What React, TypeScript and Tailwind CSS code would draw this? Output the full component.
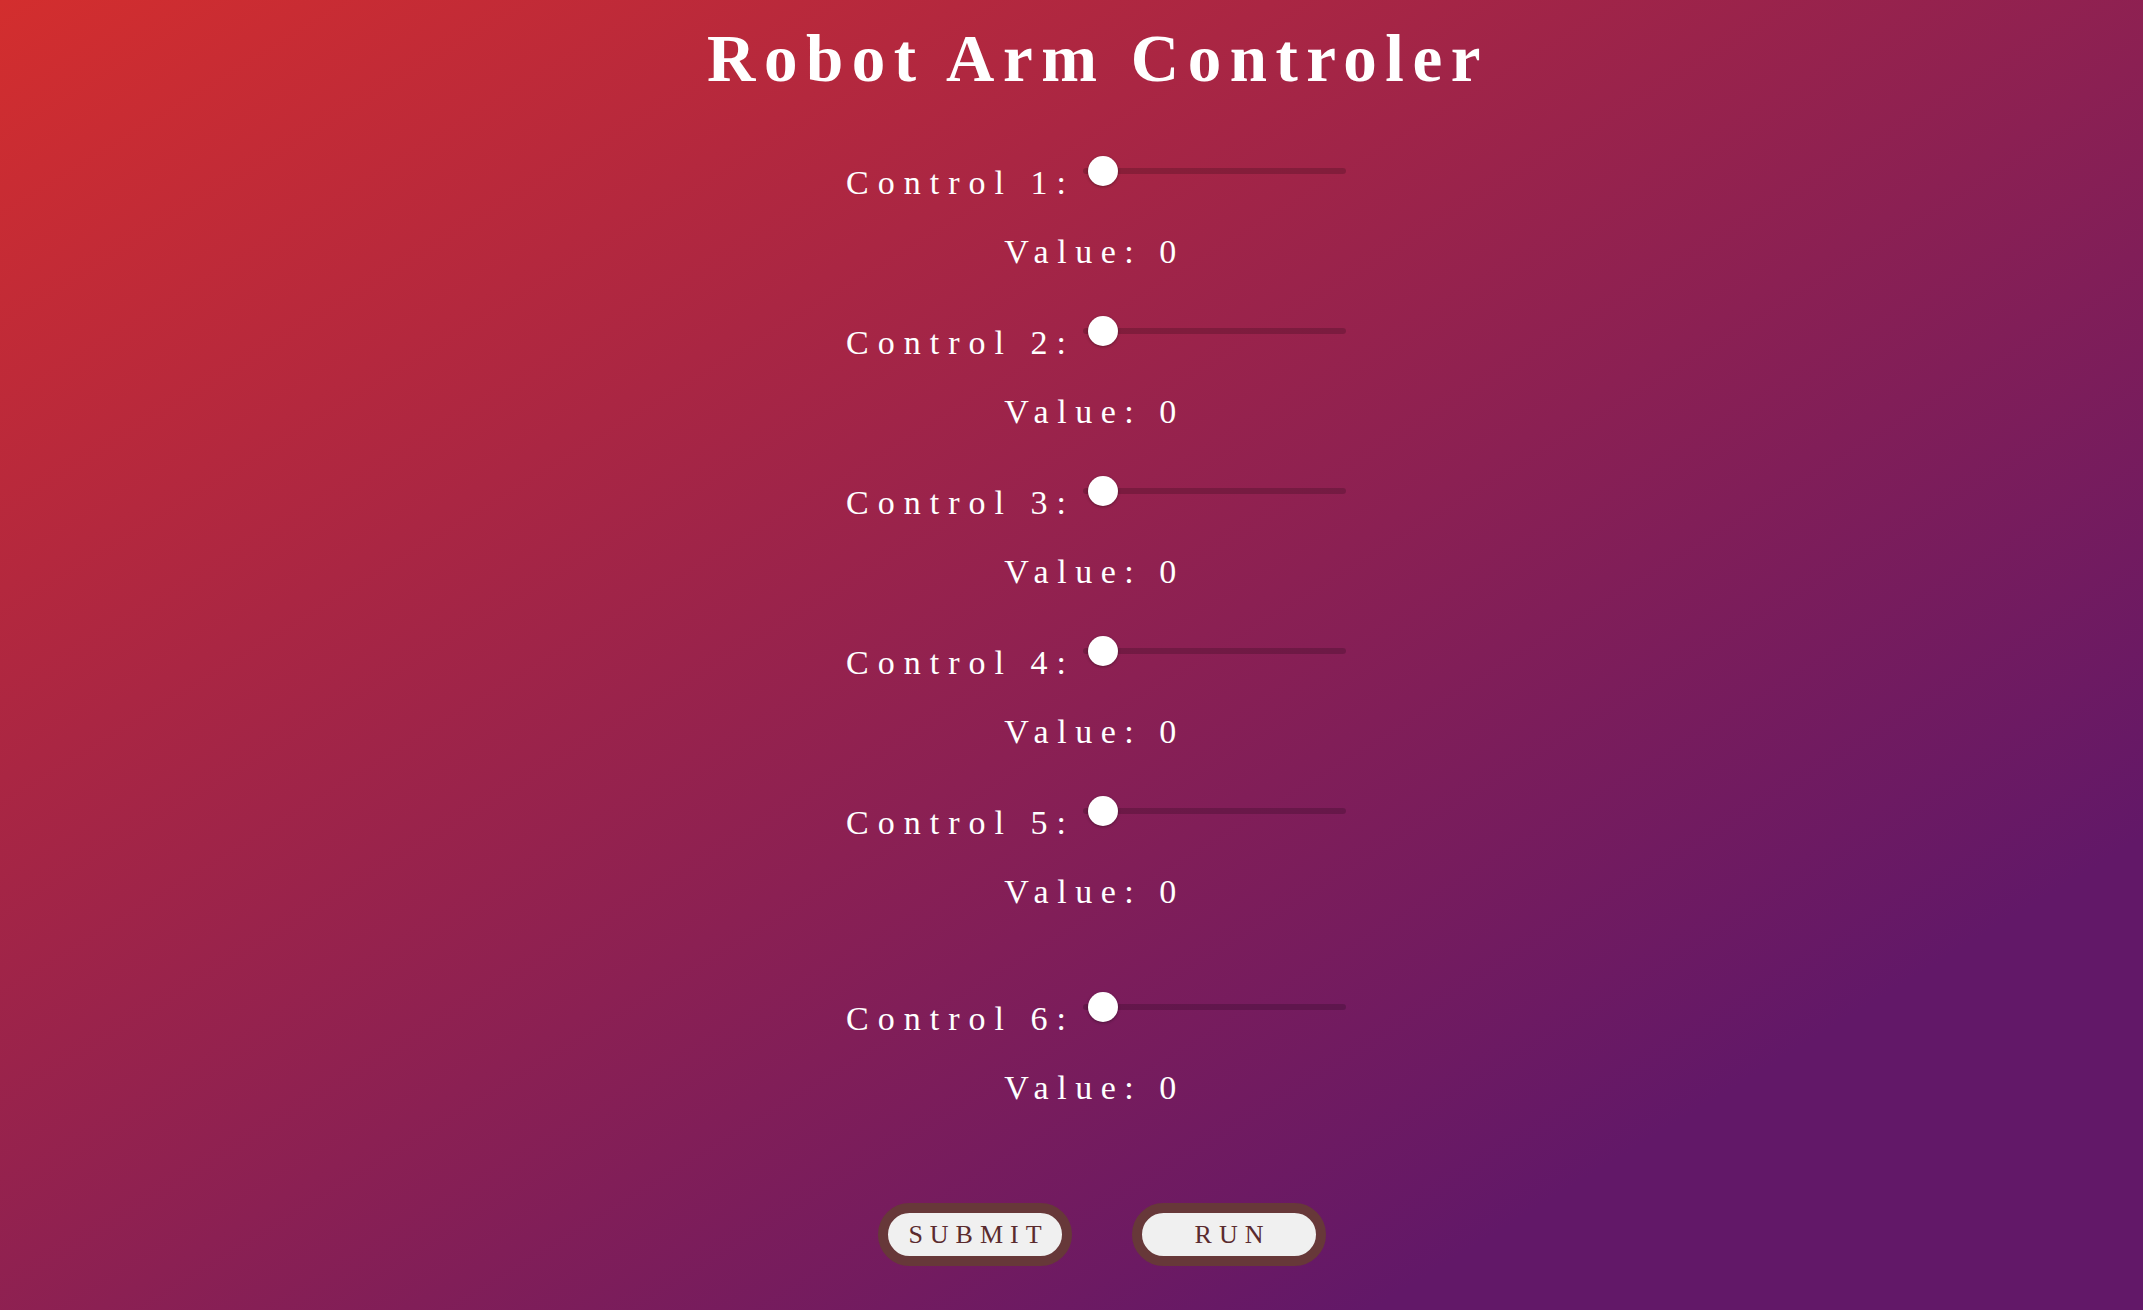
import { useState } from "react";

const serif = "font-['Liberation_Serif','Times_New_Roman',serif]";

function Control({ index, last }: { index: number; last?: boolean }) {
  const [value, setValue] = useState(0);
  return (
    <div className={last ? "mt-[87px] flex flex-col items-center" : "mt-[51px] first:mt-0 flex flex-col items-center"}>
      <div className="flex items-start justify-center pl-[49px]">
        <label className="text-[34px] leading-[40px] tracking-[9px] text-white">Control {index}:</label>
        <input
          type="range"
          min={0}
          max={180}
          value={value}
          onChange={(e) => setValue(Number(e.target.value))}
          className="ml-[8px] mt-[5px] h-[6px] w-[263px] cursor-pointer appearance-none rounded-full bg-[rgba(0,0,0,0.18)] pl-[5px] outline-none [&::-webkit-slider-thumb]:h-[30px] [&::-webkit-slider-thumb]:w-[30px] [&::-webkit-slider-thumb]:appearance-none [&::-webkit-slider-thumb]:rounded-full [&::-webkit-slider-thumb]:bg-white [&::-webkit-slider-thumb]:shadow-[0_1px_3px_rgba(0,0,0,0.35)]"
        />
      </div>
      <p className="mt-[29px] pl-[46px] text-[34px] leading-[40px] tracking-[8.5px] text-white">Value: {value}</p>
    </div>
  );
}

export default function App() {
  return (
    <div
      className={`min-h-screen w-full bg-[linear-gradient(to_bottom_right,#d32e2e,#621868_82%)] ${serif}`}
    >
      <h1 className="pl-[53px] pt-[25px] text-center text-[67px] font-bold leading-none tracking-[8.5px] text-white">
        Robot Arm Controler
      </h1>

      <div className="mt-[71px] flex flex-col">
        {[1, 2, 3, 4, 5].map((i) => (
          <Control key={i} index={i} />
        ))}
        <Control index={6} last />
      </div>

      <div className="mt-[95px] flex items-center justify-center gap-[60px] pl-[61px]">
        <button className="flex h-[63px] w-[194px] items-center justify-center rounded-full border-[10px] border-[#673839] bg-[#f0f0f0] pl-[7px] text-[26px] tracking-[7px] text-[#5a2b2e]">
          SUBMIT
        </button>
        <button className="flex h-[63px] w-[194px] items-center justify-center rounded-full border-[10px] border-[#673839] bg-[#f0f0f0] pl-[7px] text-[26px] tracking-[7px] text-[#5a2b2e]">
          RUN
        </button>
      </div>
    </div>
  );
}
